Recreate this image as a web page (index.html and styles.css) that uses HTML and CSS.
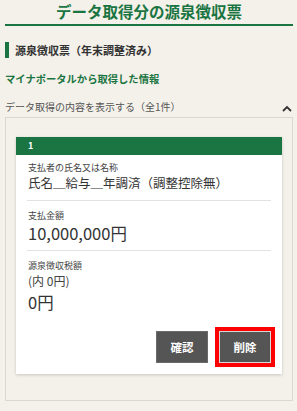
FILE: index.html
```html
<!DOCTYPE html>
<html lang="ja">
<head>
    <meta charset="UTF-8">
    <meta name="viewport" content="width=device-width, initial-scale=1.0">
    <title>データ取得分の源泉徴収票</title>
    <link rel="stylesheet" href="styles.css">
</head>
<body>

<header class="page-title">
    <h1>データ取得分の源泉徴収票</h1>
</header>

<main>
    <h2 class="section-heading">源泉徴収票（年末調整済み）</h2>
    <p class="source-note">マイナポータルから取得した情報</p>

    <div class="accordion-head">
        <span>データ取得の内容を表示する（全1件）</span>
        <svg class="chevron" width="10" height="7" viewBox="0 0 10 7">
            <path d="M1 6 L5 2 L9 6" fill="none" stroke="#333" stroke-width="1.8"/>
        </svg>
    </div>

    <section class="accordion-body">
        <div class="record-card">
            <div class="record-number">1</div>
            <div class="record-content">
                <div class="record-row">
                    <p class="row-label">支払者の氏名又は名称</p>
                    <p class="row-value">氏名＿給与＿年調済（調整控除無）</p>
                </div>
                <div class="record-row">
                    <p class="row-label">支払金額</p>
                    <p class="row-value large">10,000,000円</p>
                </div>
                <div class="record-row last">
                    <p class="row-label">源泉徴収税額</p>
                    <p class="row-sub">(内 0円)</p>
                    <p class="row-value large">0円</p>
                </div>
                <div class="record-actions">
                    <button class="action-btn">確認</button>
                    <button class="action-btn focused">削除</button>
                </div>
            </div>
        </div>
    </section>
</main>

</body>
</html>
```

FILE: styles.css
```css
/* Root Variables */
:root {
    --green: #1a7542;
    --text-color: #333;
    --page-bg: #f4f1ea;
    --border-color: #dcd8cf;
}

* {
    margin: 0;
    padding: 0;
    box-sizing: border-box;
}

body {
    font-family: "Noto Sans CJK JP", "Noto Sans", sans-serif;
    color: var(--text-color);
    background-color: var(--page-bg);
    padding: 0 4px 0 5px;
}

.page-title h1 {
    font-size: 15.5px;
    line-height: 22px;
    font-weight: bold;
    color: var(--green);
    text-align: center;
    padding-bottom: 2px;
    border-bottom: 2px solid var(--green);
}

.section-heading {
    margin-top: 16px;
    height: 16px;
    line-height: 16px;
    border-left: 4px solid var(--green);
    padding-left: 6px;
    font-size: 11px;
    font-weight: bold;
    color: #333;
}

.source-note {
    margin-top: 14px;
    font-size: 10.3px;
    line-height: 14px;
    font-weight: bold;
    color: var(--green);
}

.accordion-head {
    margin-top: 14px;
    display: flex;
    justify-content: space-between;
    align-items: center;
    font-size: 10px;
    line-height: 14px;
    color: #555;
}

.chevron {
    margin-right: 1px;
    margin-top: 2px;
}

.accordion-body {
    margin-top: 3px;
    border: 1px solid var(--border-color);
    padding: 19px 10px 26px;
}

.record-card {
    background-color: white;
    box-shadow: 0 1px 3px rgba(0, 0, 0, 0.18);
}

.record-number {
    background-color: var(--green);
    color: white;
    font-size: 9px;
    line-height: 18px;
    height: 18px;
    padding-left: 12px;
    font-weight: bold;
}

.record-content {
    padding: 0 11px 11px;
}

.record-row {
    padding: 7px 1px 8px;
    border-bottom: 1px solid #e2e2e2;
}

.record-row + .record-row {
    padding-top: 9px;
    padding-bottom: 6px;
}

.record-row.last {
    border-bottom: none;
    padding-bottom: 0;
}

.row-label {
    font-size: 9px;
    line-height: 12px;
    color: #444;
}

.row-value {
    font-size: 12.5px;
    line-height: 18px;
    color: #333;
}

.row-value.large {
    font-size: 16.5px;
    line-height: 22px;
}

.row-sub {
    margin-top: 1px;
    font-size: 12px;
    line-height: 16px;
    color: #444;
}

.record-row.last .row-value {
    margin-top: 2px;
}

.record-actions {
    margin-top: 18px;
    display: flex;
    justify-content: flex-end;
    gap: 11px;
}

.action-btn {
    width: 52px;
    height: 32px;
    background-color: #555;
    color: white;
    border: 1px solid #6a6a6a;
    font-family: "Noto Sans CJK JP", sans-serif;
    font-size: 11.5px;
    font-weight: bold;
}

.action-btn.focused {
    border-color: #d8d8d8;
    outline: 4px solid #ff0000;
}
```
